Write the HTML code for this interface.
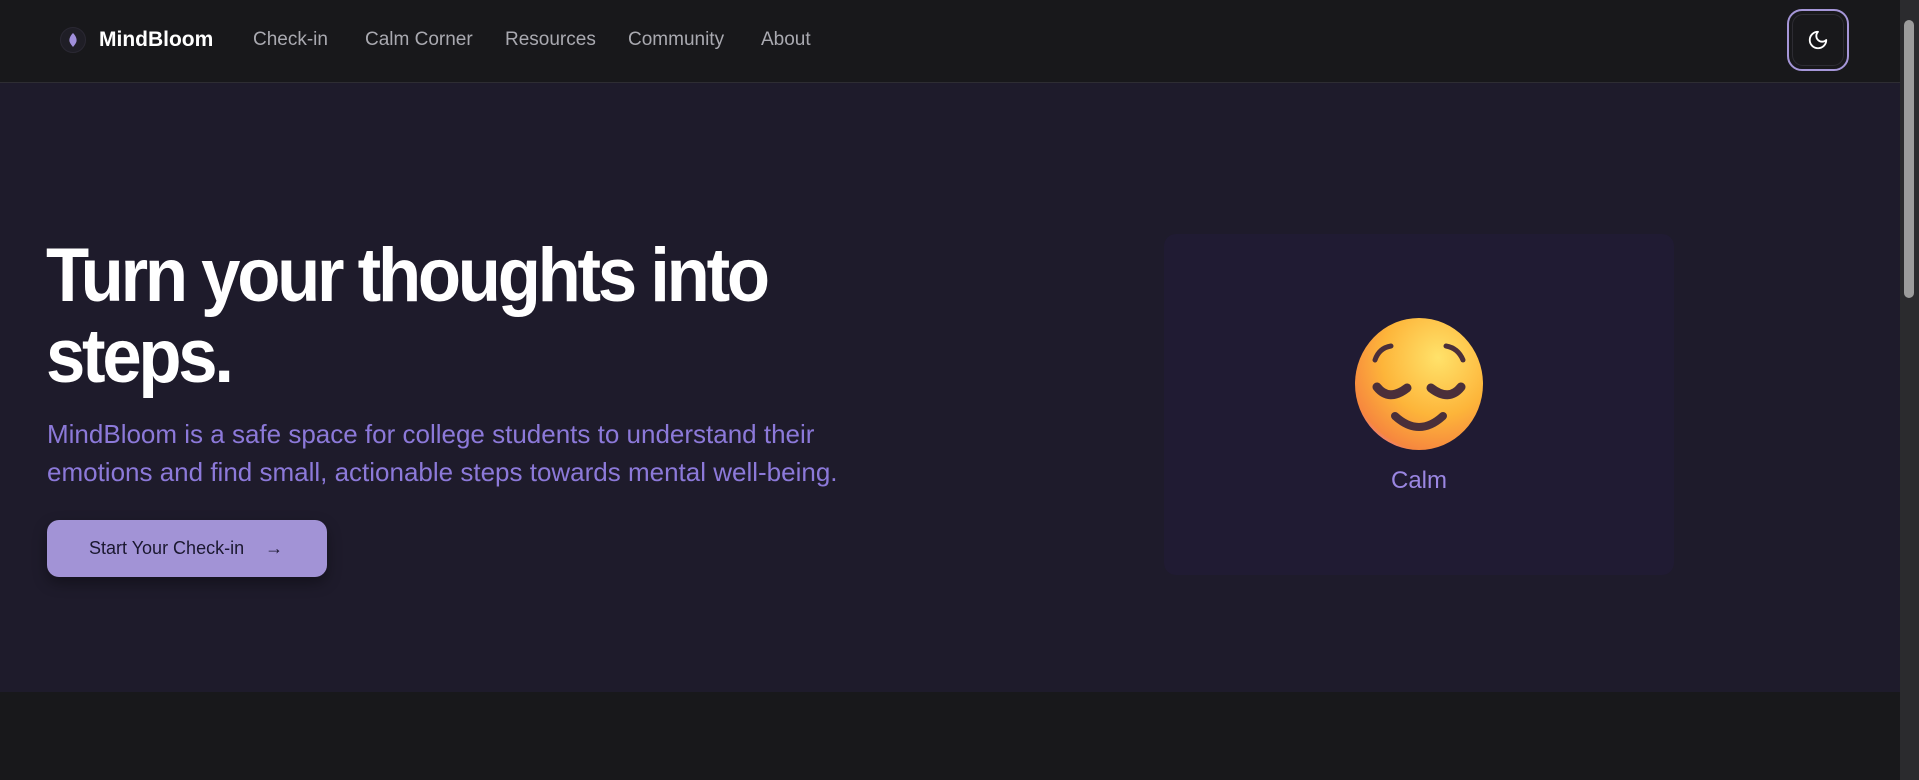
<!DOCTYPE html>
<html><head><meta charset="utf-8"><style>
*{margin:0;padding:0;box-sizing:border-box}
html,body{width:1919px;height:780px;overflow:hidden;background:#18181b;font-family:"Liberation Sans Narrow","Liberation Sans",sans-serif}
.nav{position:absolute;left:0;top:0;width:1900px;height:83px;background:#18181b;border-bottom:1px solid #2e2d33}
.logo{position:absolute;left:60px;top:27px;width:26px;height:26px;border-radius:50%;background:#1f1e26;border:1px solid #2a2833}
.brand{position:absolute;left:99px;top:28px;color:#fff;font-weight:bold;font-size:21px}
.nav a{position:absolute;top:29px;color:#a9a9b0;font-size:19px;text-decoration:none}
.theme{position:absolute;left:1787px;top:9px;width:62px;height:62px;border:2px solid #a596d8;border-radius:15px;background:#18181b}
.theme::before{content:"";position:absolute;inset:3px;border:1px solid #2d2c33;border-radius:11px}
.hero{position:absolute;left:0;top:83px;width:1900px;height:609px;background:#1e1b2b}
h1{position:absolute;left:46px;color:#fff;font-size:76px;line-height:81px;font-weight:bold;letter-spacing:-3.5px;white-space:nowrap;transform:scaleX(0.93);transform-origin:0 0}
p{position:absolute;left:47px;color:#8c79d9;font-size:26px;line-height:38px;width:820px}
.btn{position:absolute;left:47px;width:280px;height:57px;background:#a293d6;border-radius:12px;box-shadow:0 6px 14px rgba(0,0,0,.35);color:#1b1830;font-size:18px;padding:18px 0 0 42px}
.card{position:absolute;left:1164px;width:510px;height:341px;background:#201b33;border-radius:12px}
.calm{position:absolute;left:0;width:100%;top:233px;text-align:center;color:#9a86e2;font-size:24px}
.sb{position:absolute;left:1900px;top:0;width:19px;height:780px;background:#2b2b2e}
.thumb{position:absolute;left:1904px;top:20px;width:10px;height:278px;background:#9c9c9c;border-radius:5px}
</style></head><body>
<div class="nav">
<div class="logo"><svg width="26" height="26" viewBox="0 0 26 26" style="position:absolute;left:-1px;top:-1px"><path d="M13 6 C16 9 17 12 16.5 14.5 C16 16.5 14.5 18 13 20 C11.5 18 10 16.5 9.5 14.5 C9 12 10 9 13 6Z" fill="#a08fdb"/></svg></div>
<div class="brand">MindBloom</div>
<a style="left:253px">Check-in</a>
<a style="left:365px">Calm Corner</a>
<a style="left:505px">Resources</a>
<a style="left:628px">Community</a>
<a style="left:761px">About</a>
<div class="theme"><svg width="22" height="22" viewBox="0 0 24 24" style="position:absolute;left:18px;top:18px" fill="none" stroke="#fff" stroke-width="2" stroke-linecap="round" stroke-linejoin="round"><path d="M12 3a6 6 0 0 0 9 9 9 9 0 1 1-9-9Z"/></svg></div>
</div>
<div class="hero">
<h1 style="top:152px">Turn your thoughts into<br>steps.</h1>
<p style="top:332px">MindBloom is a safe space for college students to understand their emotions and find small, actionable steps towards mental well-being.</p>
<div class="btn" style="top:437px">Start Your Check-in <span style="margin-left:16px">→</span></div>
<div class="card" style="top:151px">
<svg width="140" height="140" viewBox="0 0 140 140" style="position:absolute;left:185px;top:80px">
<defs><radialGradient id="g" cx="0.65" cy="0.3" r="0.8"><stop offset="0" stop-color="#ffe26a"/><stop offset="0.55" stop-color="#fdb53a"/><stop offset="0.9" stop-color="#f6873e"/><stop offset="1" stop-color="#e87bb8"/></radialGradient></defs>
<ellipse cx="70" cy="70" rx="64" ry="66" fill="url(#g)"/>
<g fill="none" stroke="#4a2f3a" stroke-linecap="round">
<path d="M26 46 Q30 34 42 32" stroke-width="5"/><path d="M97 32 Q109 34 114 46" stroke-width="5"/>
<path d="M28 73 Q40 88 58 74" stroke-width="9"/><path d="M82 74 Q100 88 112 73" stroke-width="9"/>
<path d="M46 102 Q70 124 94 102" stroke-width="8"/></g></svg>
<div class="calm">Calm</div>
</div>
</div>
<div class="sb"></div><div class="thumb"></div>
</body></html>
